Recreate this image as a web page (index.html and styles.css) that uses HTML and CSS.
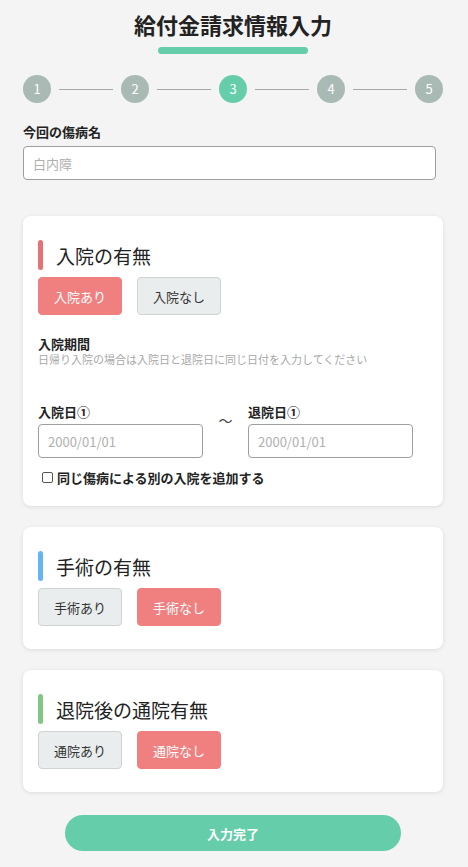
FILE: index.html
```html
<!DOCTYPE html>
<html lang="ja">
<head>
<meta charset="utf-8">
<link rel="stylesheet" href="styles.css">
</head>
<body>
<div class="page">
  <h1 class="title">給付金請求情報入力</h1>
  <div class="title-bar"></div>

  <div class="steps">
    <div class="step">1</div><div class="step-line"></div>
    <div class="step">2</div><div class="step-line"></div>
    <div class="step active">3</div><div class="step-line"></div>
    <div class="step">4</div><div class="step-line"></div>
    <div class="step">5</div>
  </div>

  <div class="field-label">今回の傷病名</div>
  <input class="text-input wide" type="text" placeholder="白内障">

  <section class="card">
    <div class="card-head"><span class="mark red"></span><span class="card-title">入院の有無</span></div>
    <div class="choices">
      <button class="choice on">入院あり</button>
      <button class="choice">入院なし</button>
    </div>
    <div class="period-label">入院期間</div>
    <div class="period-note">日帰り入院の場合は入院日と退院日に同じ日付を入力してください</div>
    <div class="dates">
      <div class="date-col">
        <div class="date-label">入院日①</div>
        <input class="text-input date" type="text" placeholder="2000/01/01">
      </div>
      <div class="tilde">〜</div>
      <div class="date-col">
        <div class="date-label">退院日①</div>
        <input class="text-input date" type="text" placeholder="2000/01/01">
      </div>
    </div>
    <label class="check"><span class="box"></span>同じ傷病による別の入院を追加する</label>
  </section>

  <section class="card">
    <div class="card-head"><span class="mark blue"></span><span class="card-title">手術の有無</span></div>
    <div class="choices">
      <button class="choice">手術あり</button>
      <button class="choice on">手術なし</button>
    </div>
  </section>

  <section class="card">
    <div class="card-head"><span class="mark green"></span><span class="card-title">退院後の通院有無</span></div>
    <div class="choices">
      <button class="choice">通院あり</button>
      <button class="choice on">通院なし</button>
    </div>
  </section>

  <button class="submit">入力完了</button>
</div>
</body>
</html>
```

FILE: styles.css
```css
* { box-sizing: border-box; }
html, body { margin: 0; padding: 0; }
body {
  background: #f4f4f4;
  font-family: "Noto Sans CJK JP", "Noto Sans", sans-serif;
  color: #222;
}
.page {
  width: 420px;
  margin-left: 23px;
  padding-bottom: 17px;
}
.title {
  margin: 0;
  padding-top: 8px;
  font-size: 22px;
  line-height: 32px;
  font-weight: 700;
  text-align: center;
  color: #222;
}
.title-bar {
  width: 150px;
  height: 7px;
  margin: 7px auto 0;
  border-radius: 4px;
  background: #66cdaa;
}
.steps {
  display: flex;
  align-items: center;
  margin-top: 21px;
}
.step {
  width: 28px;
  height: 28px;
  border-radius: 50%;
  background: #a9bab4;
  color: #fff;
  font-size: 13px;
  line-height: 28px;
  text-align: center;
  flex: none;
}
.step.active { background: #66cdaa; }
.step-line {
  flex: none;
  width: 54px;
  height: 1px;
  margin: 0 8px;
  background: #a8a8a8;
}
.field-label {
  margin-top: 20px;
  font-size: 13px;
  line-height: 18px;
  font-weight: 700;
}
.text-input {
  display: block;
  height: 34px;
  border: 1px solid #9e9e9e;
  border-radius: 4px;
  background: #fff;
  padding: 0 9px;
  font-family: inherit;
  font-size: 13px;
  color: #222;
  outline: none;
}
.text-input::placeholder { color: #b0b0b0; }
.text-input.wide { width: 413px; margin-top: 5px; }
.card {
  background: #fff;
  border-radius: 8px;
  box-shadow: 0 1px 4px rgba(0, 0, 0, 0.1);
  padding: 24px 15px 23px;
  margin-top: 21px;
}
.text-input.wide + .card { margin-top: 36px; }
.card-head {
  display: flex;
  align-items: center;
  height: 30px;
}
.mark {
  width: 5px;
  height: 30px;
  border-radius: 3px;
  flex: none;
}
.mark.red { background: #e57373; }
.mark.blue { background: #64b5f6; }
.mark.green { background: #81c784; }
.card-title {
  margin-left: 13px;
  font-size: 19px;
  font-weight: 400;
  color: #222;
}
.choices {
  display: flex;
  gap: 15px;
  margin-top: 7px;
}
.choice {
  width: 84px;
  height: 38px;
  border-radius: 4px;
  border: 1px solid #cfd3d3;
  background: #e9eded;
  color: #333;
  font-family: inherit;
  font-size: 13px;
  padding: 0;
}
.choice.on {
  background: #f08080;
  border-color: #f08080;
  color: #fff;
}
.period-label {
  margin-top: 21px;
  font-size: 13px;
  line-height: 16px;
  font-weight: 700;
}
.period-note {
  font-size: 11px;
  line-height: 14px;
  color: #a8a8a8;
}
.dates {
  display: flex;
  margin-top: 37px;
}
.date-col { width: 165px; }
.date-label {
  font-size: 13px;
  line-height: 18px;
  font-weight: 700;
}
.text-input.date { width: 165px; margin-top: 3px; }
.tilde {
  width: 45px;
  text-align: center;
  padding-top: 7px;
  font-size: 14px;
  line-height: 20px;
  color: #444;
}
.check {
  display: flex;
  align-items: center;
  margin-top: 10px;
  margin-left: 4px;
  height: 18px;
  font-size: 13px;
  font-weight: 700;
  color: #222;
}
.box {
  width: 11px;
  height: 11px;
  border: 1px solid #555;
  border-radius: 2px;
  background: #fff;
  margin-right: 4px;
  flex: none;
}
.card:has(.check) { padding-bottom: 20px; }
.submit {
  display: block;
  width: 336px;
  height: 36px;
  margin: 23px auto 0;
  border: none;
  border-radius: 18px;
  background: #66cdaa;
  color: #fff;
  font-family: inherit;
  font-size: 13px;
  font-weight: 700;
}
```
